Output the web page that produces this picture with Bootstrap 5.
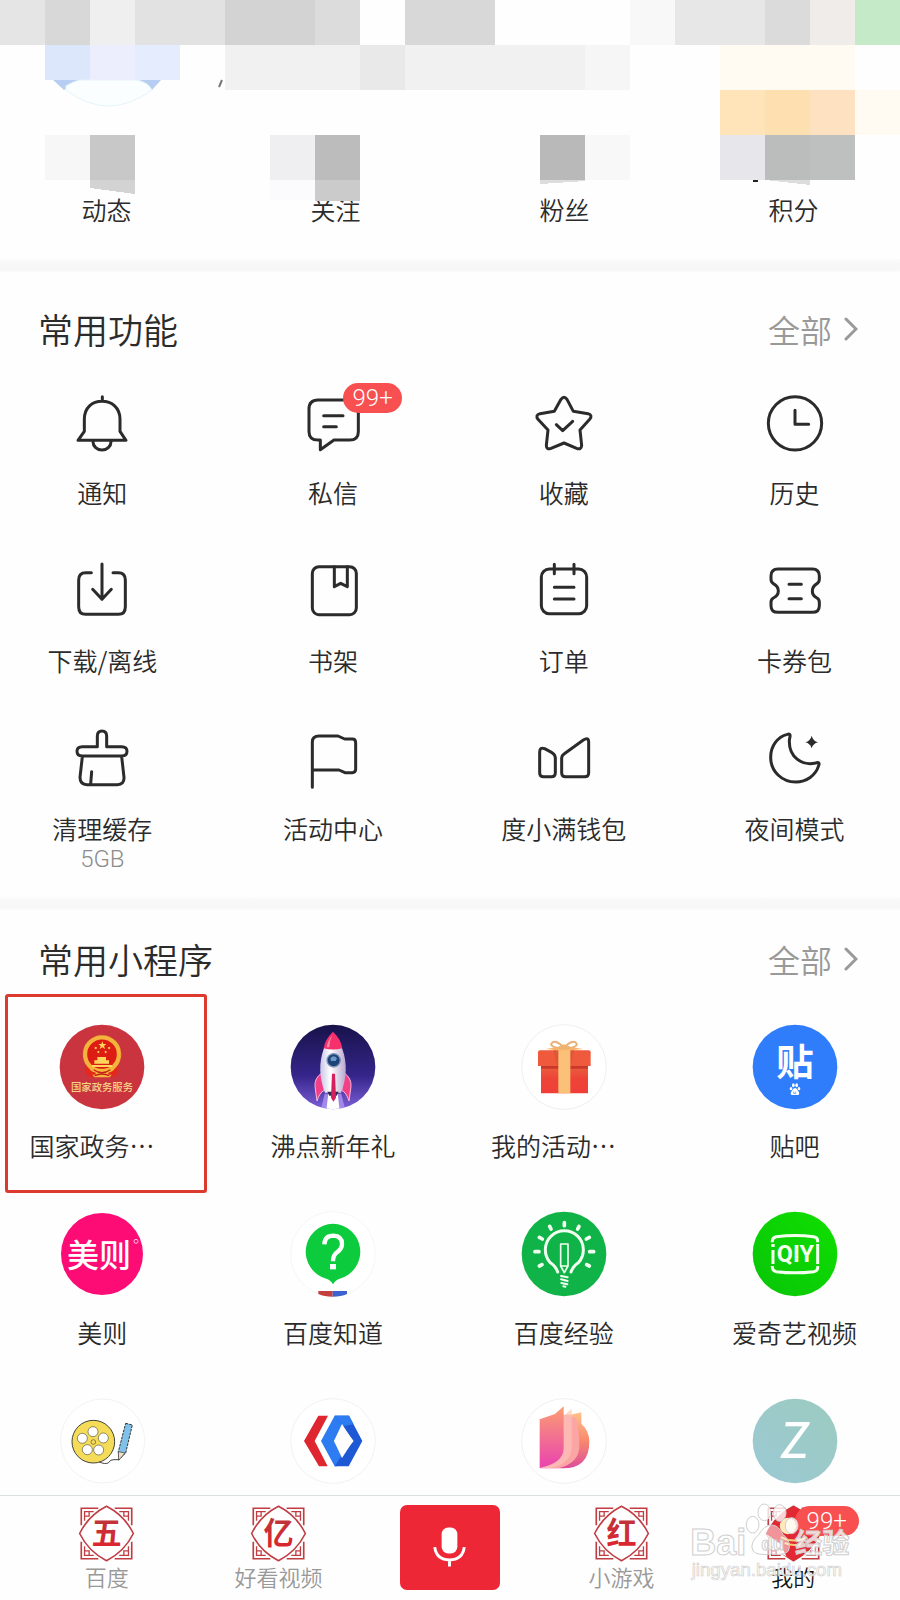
<!DOCTYPE html>
<html lang="zh-CN">
<head>
<meta charset="utf-8">
<meta name="viewport" content="width=device-width, initial-scale=1">
<title>我的</title>
<link href="https://cdn.jsdelivr.net/npm/bootstrap@5.3.0/dist/css/bootstrap.min.css" rel="stylesheet">
<style>
  body { font-family: "Noto Sans CJK SC", "Liberation Sans", sans-serif; font-weight: 350; color: #2b2b2b; background: #fefefe; }
  a { color: inherit; text-decoration: none; }
  svg { display: block; }
  .page { overflow-x: clip; }
  .mosaic { width: 100%; height: auto; overflow: visible; position: relative; z-index: 1; }
  .label-text { font-size: 25px; line-height: 30px; white-space: nowrap; }
  .stats { padding-bottom: 35px; }
  .band { height: 13px; background: linear-gradient(#fcfcfc, #f7f7f7 40%, #f7f7f7 80%, #fbfbfb); }
  .section-head { padding: 37px 42px 43px 38px; }
  .section-head.apps-head { padding-top: 29px; padding-bottom: 45px; }
  .section-head h2 { font-size: 35px; line-height: 40px; font-weight: 350; }
  .more-link { font-size: 32px; line-height: 40px; color: #999; gap: 12px; }
  .wide-row { margin-left: -13px; margin-right: -10px; }
  .feature-row { row-gap: 53px; }
  .feature-icon { width: 64px; height: 64px; margin-bottom: 21px; }
  .feature-icon svg { width: 64px; height: 64px; fill: none; stroke: #2b2b2b; stroke-width: 9; stroke-linecap: round; stroke-linejoin: round; }
  .cache-size { font: 300 24px/28px Roboto, sans-serif; color: #8c8c8c; padding-top: 2px; }
  .count-pill { position: absolute; width: 59px; height: 30px; border-radius: 15px; background: #f84f50; color: #fff; font: 300 24px/30px Roboto, sans-serif; text-align: center; }
  .feature-icon .count-pill { left: 42px; top: -9px; }
  .features { padding-bottom: 24px; }
  .app-row { row-gap: 51px; padding-bottom: 11px; }
  .app-icon { width: 86px; height: 86px; }
  .app-name { margin-top: 20px; }
  .clipped-name { width: 146px; }
  .highlight { position: absolute; left: 18px; right: 11px; top: -30px; bottom: -33px; border: 3px solid #dc3a2f; border-radius: 3px; pointer-events: none; }
  .tabbar { background: #fefefe; border-top: 1px solid #d9e0df; padding: 9px 21px 10px; }
  .tabbar .tab { flex: 1 1 0; font-size: 22px; line-height: 28px; color: #999; }
  .tabbar .tab.active { color: #111; }
  .tab svg { width: 57px; height: 57px; }
  .tab .count-pill { left: 30px; top: 1px; width: 64px; }
  .mic-btn { width: 100px; height: 85px; border-radius: 7px; background: #ee2737; }
  .watermark { position: absolute; right: 42px; top: 5px; width: 168px; height: 80px; pointer-events: none; }
</style>
</head>
<body>
<div class="page d-flex flex-column min-vh-100">

  <header>
    <svg class="mosaic" viewBox="0 0 900 194" shape-rendering="crispEdges" aria-hidden="true">
      <path fill="#e5e5e5" d="M0 0h45v45H0z"/><path fill="#d8d8d8" d="M45 0h45v45H45z"/><path fill="#efeff0" d="M90 0h45v45H90z"/>
      <path fill="#e2e2e2" d="M135 0h90v45h-90z"/><path fill="#d3d3d3" d="M225 0h90v45h-90z"/><path fill="#dcdcdc" d="M315 0h45v45h-45z"/>
      <path fill="#d8d8d8" d="M405 0h90v45h-90z"/><path fill="#f8f8f8" d="M630 0h45v45h-45z"/><path fill="#e7e7e7" d="M675 0h90v45h-90z"/>
      <path fill="#dbdbdb" d="M765 0h45v45h-45z"/><path fill="#f0ecea" d="M810 0h45v45h-45z"/><path fill="#c4eac8" d="M855 0h45v45h-45z"/>
      <path fill="#dce7fc" d="M45 45h45v35H45z"/><path fill="#edeefd" d="M90 45h45v35H90z"/><path fill="#e4ecfe" d="M135 45h45v35h-45z"/>
      <g shape-rendering="auto">
        <path fill="#b8cdf2" d="M53 80h26l-15 10zM139 80h22l-9 10z"/>
        <path fill="#fafeff" stroke="#e6f4fa" d="M66 86Q76 80 82 80H136Q148 82 152 90Q108 122 66 90z"/>
        <path stroke="#777" stroke-width="2" d="M222 80l-3 7"/>
      </g>
      <path fill="#f1f1f1" d="M225 45h360v45H225z"/><path fill="#e9e9e9" d="M360 45h45v45h-45z"/><path fill="#f6f6f6" d="M585 45h45v45h-45z"/>
      <path fill="#fffbf3" d="M720 45h135v45H720zM855 90h45v45h-45z"/>
      <path fill="#ffe4ba" d="M720 90h45v45h-45z"/><path fill="#fedfb0" d="M765 90h45v45h-45z"/><path fill="#fee1c0" d="M810 90h45v45h-45z"/>
      <path fill="#f7f7f7" d="M45 135h45v45H45z"/><path fill="#c8c8c8" d="M90 135h45v45H90z"/><path fill="#d3d3d3" d="M90 180h45v14l-45-6z"/>
      <path fill="#efeff1" d="M270 135h45v45h-45z"/><path fill="#fbfbfe" d="M270 180h45v20h-45z"/><path fill="#bcbcbc" d="M315 135h45v45h-45z"/><path fill="#cbcbcb" d="M315 180h45v21h-45z"/>
      <path fill="#b9b9b9" d="M540 135h45v45h-45z"/><path fill="#ddd" d="M540 180h45v1l-45 3z"/><path fill="#f8f8f8" d="M585 135h45v45h-45z"/>
      <path fill="#e7e6ea" d="M720 135h45v45h-45z"/><path fill="#bbbdbd" d="M765 135h45v45h-45z"/><path fill="#bdc0bf" d="M810 135h45v45h-45z"/><path fill="#ddd" d="M765 180h45v5z"/><path fill="#222" d="M753 180h5v2h-5z"/>
    </svg>
    <div class="row row-cols-4 gx-3 stats text-center label-text">
      <a class="col" href="#">动态</a>
      <a class="col" href="#">关注</a>
      <a class="col" href="#">粉丝</a>
      <a class="col" href="#">积分</a>
    </div>
  </header>

  <div class="band"></div>

  <section class="features">
    <div class="section-head d-flex justify-content-between align-items-center">
      <h2 class="mb-0">常用功能</h2>
      <a class="more-link d-flex align-items-center" href="#">全部
        <svg width="14" height="24" viewBox="0 0 14 24" fill="none" stroke="#999" stroke-width="3" stroke-linecap="round"><path d="M2 2l10 10L2 22"/></svg>
      </a>
    </div>
    <div class="row row-cols-4 wide-row feature-row label-text">
      <a class="col d-flex flex-column align-items-center" href="#">
        <span class="feature-icon"><svg viewBox="213 306 192 192"><path d="M310 320v12M237 451l19-27v-36c0-36 24-54 53-54s54 18 54 54v36l18 27zM282 455a27 25 0 0 0 54 0"/></svg></span>通知
      </a>
      <a class="col d-flex flex-column align-items-center" href="#">
        <span class="feature-icon position-relative"><svg viewBox="904 306 192 192"><path d="M1050 330H955q-27 0-27 27v68q0 25 27 25h7v29l41-29h47q26 0 26-25v-68M972 377h58M972 410h38"/></svg><span class="count-pill">99+</span></span>私信
      </a>
      <a class="col d-flex flex-column align-items-center" href="#">
        <span class="feature-icon"><svg viewBox="248 306 192 192"><path d="M335 328q9-13 18 0l19 36 44 7q15 5 5 17l-29 32 5 46q-1 14-15 9l-38-16-39 16q-14 5-14-9l5-46-30-32q-9-13 6-17l43-7zM321 404l19 18 30-28"/></svg></span>收藏
      </a>
      <a class="col d-flex flex-column align-items-center" href="#">
        <span class="feature-icon"><svg viewBox="941 306 192 192"><circle cx="1037" cy="400" r="80"/><path d="M1037 361v42h41"/></svg></span>历史
      </a>
      <a class="col d-flex flex-column align-items-center" href="#">
        <span class="feature-icon"><svg viewBox="213 60 192 192"><path d="M277 98h-17q-21 0-21 22v80q0 23 21 23h98q21 0 21-23v-80q0-22-21-22h-16M309 72v106M281 148l28 30 28-30"/></svg></span>下载/离线
      </a>
      <a class="col d-flex flex-column align-items-center" href="#">
        <span class="feature-icon"><svg viewBox="904 60 192 192"><rect x="938" y="80" width="132" height="144" rx="20"/><path d="M1004 80v60l19-10 20 10V80"/></svg></span>书架
      </a>
      <a class="col d-flex flex-column align-items-center" href="#">
        <span class="feature-icon"><svg viewBox="248 60 192 192"><rect x="276" y="87" width="136" height="134" rx="24"/><path d="M315 73v28M374 73v28M315 142h59M315 177h59"/></svg></span>订单
      </a>
      <a class="col d-flex flex-column align-items-center" href="#">
        <span class="feature-icon"><svg viewBox="940 60 192 192"><path d="M985 87h103q21 0 21 21v10q0 9-7 13-14 8-14 22t14 21q7 4 7 13v10q0 20-21 20H985q-21 0-21-20v-10q0-9 7-13 15-7 15-21t-15-22q-7-4-7-13v-10q0-21 21-21zM1018 133h37M1018 176h37"/></svg></span>卡券包
      </a>
      <a class="col d-flex flex-column align-items-center" href="#">
        <span class="feature-icon"><svg viewBox="213 564 192 192"><path d="M295 620v-32q0-15 14-15t14 15v32h45q16 0 16 14t-16 14H250q-16 0-16-14t16-14zM250 650l-7 62q0 22 21 22h91q21 0 20-22l-7-62M278 695l-3 37"/></svg></span>清理缓存
        <span class="cache-size">5GB</span>
      </a>
      <a class="col d-flex flex-column align-items-center" href="#">
        <span class="feature-icon"><svg viewBox="904 564 192 192"><path d="M938 742V606q0-18 20-18h57l20 9h23q10 0 10 11v80q0 10-10 10h-22l-18-8h-80"/></svg></span>活动中心
      </a>
      <a class="col d-flex flex-column align-items-center" href="#">
        <span class="feature-icon"><svg viewBox="248 564 192 192"><path d="M271 637q0-17 15-11l22 12q10 6 10 16v44q0 12-12 12h-23q-12 0-12-12zM337 655q0-9 8-14l57-41q16-10 16 6v92q0 12-12 12h-57q-12 0-12-12z"/></svg></span>度小满钱包
      </a>
      <a class="col d-flex flex-column align-items-center" href="#">
        <span class="feature-icon"><svg viewBox="940 564 192 192"><path d="M1013 583C984 590 963 618 963 652c0 43 34 74 75 74 33 0 60-20 69-49q5-13-9-8c-42 10-80-19-79-66q0-4 2-13 2-10-8-7z"/><path fill="#2b2b2b" stroke="none" d="M1086 587q4 16 19 20-15 4-19 18-4-14-19-18 15-4 19-20z"/></svg></span>夜间模式
      </a>
    </div>
  </section>

  <div class="band"></div>

  <section>
    <div class="section-head apps-head d-flex justify-content-between align-items-center">
      <h2 class="mb-0">常用小程序</h2>
      <a class="more-link d-flex align-items-center" href="#">全部
        <svg width="14" height="24" viewBox="0 0 14 24" fill="none" stroke="#999" stroke-width="3" stroke-linecap="round"><path d="M2 2l10 10L2 22"/></svg>
      </a>
    </div>
    <div class="row row-cols-4 wide-row app-row label-text">
      <a class="col d-flex flex-column align-items-center position-relative" href="#">
        <svg class="app-icon" viewBox="178 311 258 258">
          <circle cx="307" cy="440" r="127" fill="#c9343f"/>
          <path fill="#e5281c" d="M258 438h98v18l-10 14q-39-10-78 0l-10-14z"/>
          <circle cx="307" cy="402" r="51" fill="#dd1d14" stroke="#f4b33c" stroke-width="13"/>
          <circle cx="307" cy="402" r="57" fill="none" stroke="#d9801f" stroke-width="2" stroke-dasharray="5 6"/>
          <path fill="#ffd65a" d="M308 363l3 8h9l-7 6 3 9-8-5-8 5 3-9-7-6h9zM288 379l5 4-5 4-4-4zM328 379l5 4-5 4-4-4zM296 391l4 4-4 4-4-4zM318 391l4 4-4 4-4-4zM293 410h26v10h9v10h-44v-10h9zM277 434h60v6h-60z"/>
          <path fill="#f6b73b" d="M270 445h74q-4 10-18 11v7h10l-6 8h-46l-6-8h10v-7q-14-1-18-11z"/>
          <path stroke="#c6221b" stroke-width="4" fill="none" d="M282 448q25 18 50 0M285 466q22-10 44 0"/>
          <text x="307" y="513" font-size="31" fill="#f6d486" font-weight="500" text-anchor="middle">国家政务服务</text>
        </svg>
        <span class="app-name clipped-name">国家政务…</span>
        <span class="highlight"></span>
      </a>
      <a class="col d-flex flex-column align-items-center" href="#">
        <svg class="app-icon" viewBox="871 311 258 258">
          <defs>
            <linearGradient id="sky" x1="0" y1="0" x2="0" y2="1"><stop offset="0" stop-color="#17124a"/><stop offset=".6" stop-color="#35258a"/><stop offset="1" stop-color="#7c5fd8"/></linearGradient>
            <linearGradient id="hull" x1="0" y1="0" x2="1" y2="0"><stop offset="0" stop-color="#c9c6e8"/><stop offset=".4" stop-color="#fff"/><stop offset="1" stop-color="#b9a6cf"/></linearGradient>
            <clipPath id="sky-clip"><circle cx="1000" cy="440" r="127"/></clipPath>
          </defs>
          <circle cx="1000" cy="440" r="127" fill="url(#sky)"/>
          <g clip-path="url(#sky-clip)">
            <path fill="#b7a0f5" opacity=".7" d="M975 520h50l12 50h-74z"/><path fill="#fff" d="M986 520h28l6 50h-40z"/>
          </g>
          <path fill="#f33f87" stroke="#ffb5d4" stroke-width="3" d="M966 458q-22 16-20 40l6 44q8-26 22-32zM1034 458q22 16 20 40l-6 44q-8-26-22-32z"/>
          <path fill="url(#hull)" d="M973 383h54q24 66-3 134h-48q-27-68-3-134z"/>
          <path fill="#f5306c" d="M1000 334q25 24 28 50-28 7-56 0 3-26 28-50z"/><path fill="#ff8bab" d="M998 345q-15 18-17 36h8q0-20 9-36z"/>
          <circle cx="1002" cy="420" r="20" fill="#1d4478" stroke="#8294b8" stroke-width="4"/><path fill="#6d99c8" d="M992 414q10-12 20 0l-4 8h-14z"/>
          <path fill="#32284d" d="M983 514h34l-6 12h-22z"/><path fill="#d5205d" d="M997 460h9l3 72-8 12-7-12z"/>
        </svg>
        <span class="app-name">沸点新年礼</span>
      </a>
      <a class="col d-flex flex-column align-items-center" href="#">
        <svg class="app-icon" viewBox="213 311 258 258">
          <defs><linearGradient id="gift" x1="0" y1="0" x2="0" y2="1"><stop offset="0" stop-color="#e8663f"/><stop offset=".5" stop-color="#ee4438"/><stop offset="1" stop-color="#ef3f38"/></linearGradient></defs>
          <circle cx="342" cy="440" r="127" fill="#fff" stroke="#f0efef" stroke-width="3"/>
          <path fill="url(#gift)" d="M273 430h141v89H273z"/><path fill="#c93929" d="M273 437h141v8H273z"/>
          <path fill="#ef5a3c" d="M264 396q0-6 6-6h146q6 0 6 6v41H264z"/><path fill="#df5638" d="M310 390h62l-10 47h-42z"/>
          <path fill="#fbc178" d="M325 388h36v131h-36z"/><path fill="#fbb568" d="M286 386l34-5 22-9 24 9 34 5-36 4h-44z"/>
          <path fill="none" stroke="#eab277" stroke-width="6" d="M340 384q-40-2-36-14 10-16 38 12M344 384q40-2 36-14-10-16-38 12"/>
        </svg>
        <span class="app-name clipped-name">我的活动…</span>
      </a>
      <a class="col d-flex flex-column align-items-center" href="#">
        <svg class="app-icon" viewBox="906 311 258 258">
          <circle cx="1035" cy="440" r="127" fill="#2f7dfb"/>
          <text x="1035" y="467" font-size="112" font-weight="700" fill="#fff" text-anchor="middle">贴</text>
          <g fill="#fff"><ellipse cx="1023" cy="505" rx="4" ry="5"/><ellipse cx="1030" cy="495" rx="4" ry="6"/><ellipse cx="1040" cy="495" rx="4" ry="6"/><ellipse cx="1047" cy="505" rx="4" ry="5"/><path d="M1035 503q6 0 9 8 7 8 1 13-10 0-10-1-2 2-10 1-6-5 1-13 3-8 9-8z"/></g>
          <path fill="none" stroke="#2f7dfb" stroke-width="2" d="M1031 514v5h6v-5"/>
        </svg>
        <span class="app-name">贴吧</span>
      </a>

      <a class="col d-flex flex-column align-items-center" href="#">
        <svg class="app-icon" viewBox="178 63 258 258">
          <circle cx="307" cy="192" r="123" fill="#fc0c74"/>
          <text x="298" y="231" font-size="96" font-weight="500" fill="#fff" text-anchor="middle">美则</text>
          <circle cx="409" cy="154" r="6" fill="none" stroke="#ffc4dc" stroke-width="3"/>
        </svg>
        <span class="app-name">美则</span>
      </a>
      <a class="col d-flex flex-column align-items-center" href="#">
        <svg class="app-icon" viewBox="871 63 258 258">
          <circle cx="1000" cy="192" r="127" fill="#fff" stroke="#f2f2f2" stroke-width="2"/>
          <path fill="#0ccb3d" d="M1000 101a84 84 0 0 1 20 165q-12 3-20 17-8-14-20-17a84 84 0 0 1 20-165z"/>
          <path fill="none" stroke="#fff" stroke-width="13" d="M974 163q1-26 27-26 26 1 26 25 0 14-14 24-13 9-13 28"/><path fill="#fff" d="M991 222h18v16h-18z"/>
          <path fill="#c4403f" d="M956 303h43v17q-25 0-43-8z"/><path fill="#3b62cf" d="M999 303h43v9q-18 8-43 8z"/>
        </svg>
        <span class="app-name">百度知道</span>
      </a>
      <a class="col d-flex flex-column align-items-center" href="#">
        <svg class="app-icon" viewBox="213 63 258 258">
          <circle cx="342" cy="192" r="127" fill="#10b347"/>
          <g fill="none" stroke="#f0fff0" stroke-linecap="round">
            <path stroke-width="9" d="M323 246q-6-18-22-28a57 57 0 1 1 84 0q-16 10-22 28"/>
            <path stroke-width="11" d="M343 98v9M299 109l4 8M387 109l-4 8M268 142l9 5M418 142l-9 5M255 185h12M419 185h12M268 228l8-4M418 228l-8-4"/>
            <path stroke-width="5" stroke-linejoin="round" d="M332 162h22v66l-11 20-11-20zM332 228h22"/>
            <path stroke-width="6" d="M333 258l20 4M333 268l20 5M334 279l18 4M340 289l6 1"/>
          </g>
        </svg>
        <span class="app-name">百度经验</span>
      </a>
      <a class="col d-flex flex-column align-items-center" href="#">
        <svg class="app-icon" viewBox="906 63 258 258">
          <defs><linearGradient id="qiy" x1="1" y1="0" x2="0" y2="1"><stop offset="0" stop-color="#10e000"/><stop offset="1" stop-color="#08c408"/></linearGradient></defs>
          <circle cx="1035" cy="192" r="127" fill="url(#qiy)"/>
          <path fill="none" stroke="#f4fff0" stroke-width="9" d="M967 157v-5q1-10 12-12 56-7 112 0 12 2 12 12v5M967 228v5q1 10 12 12 56 7 112 0 12-2 12-12v-5M1103 162v60M969 180v42"/>
          <path fill="#f4fff0" d="M964 162h10v9h-10z"/>
          <text x="1036" y="217" font-size="70" font-weight="700" font-family="'Liberation Sans Narrow', Roboto, sans-serif" fill="#f4fff0" text-anchor="middle">QIY</text>
        </svg>
        <span class="app-name">爱奇艺视频</span>
      </a>

      <a class="col d-flex flex-column align-items-center" href="#" aria-label="影视剪辑">
        <svg class="app-icon" viewBox="178 626 258 258">
          <circle cx="309" cy="755" r="126" fill="#fff" stroke="#f3f3f3" stroke-width="3"/>
          <circle cx="281" cy="757" r="64" fill="#f5dc58" stroke="#43413a" stroke-width="3"/>
          <g fill="#fff" stroke="#5a5540" stroke-width="2"><circle cx="280" cy="727" r="15"/><circle cx="311" cy="746" r="15"/><circle cx="297" cy="782" r="15"/><circle cx="263" cy="781" r="15"/><circle cx="248" cy="747" r="15"/><circle cx="281" cy="758" r="7" fill="#f5dc58"/></g>
          <path fill="#7fc1e9" stroke="#333" stroke-width="3" stroke-dasharray="8 3" d="M378 702l20 5-20 84-20 20-2-24z"/><path fill="#f4dfc6" stroke="#333" stroke-width="2" d="M356 787l20 4-19 22z"/>
          <path fill="none" stroke="#444" stroke-width="3" d="M299 818q18 8 28 2 4-10 16-9h14"/>
        </svg>
      </a>
      <a class="col d-flex flex-column align-items-center" href="#" aria-label="百度小程序">
        <svg class="app-icon" viewBox="871 626 258 258">
          <circle cx="1000" cy="755" r="127" fill="#fff" stroke="#f2f2f2" stroke-width="3"/>
          <path fill="#df2530" d="M956 679h29l-40 76 39 76h-26l-45-76z"/>
          <path fill="#2d7cf2" d="M1005 679h43l-20 32-25 44 24 42-15 34h-7l-41-76z"/>
          <path fill="#1f58d4" d="M1048 679l40 76-41 76h-42l22-34 35-42-34-44-23-32z"/>
          <path fill="#2d7cf2" d="M1005 679h43l14 26-34 6z"/>
          <path fill="#fff" d="M1027 704l33 51-33 51-24-51z"/>
        </svg>
      </a>
      <a class="col d-flex flex-column align-items-center" href="#" aria-label="阅读">
        <svg class="app-icon" viewBox="213 626 258 258">
          <defs>
            <linearGradient id="leaf-a" x1="0" y1="0" x2="0" y2="1"><stop offset="0" stop-color="#fb9e72"/><stop offset="1" stop-color="#ea42b0"/></linearGradient>
            <linearGradient id="leaf-b" x1="0" y1="0" x2="0" y2="1"><stop offset="0" stop-color="#ffc28c"/><stop offset=".5" stop-color="#f98a6c"/><stop offset="1" stop-color="#dc4c9c"/></linearGradient>
          </defs>
          <circle cx="342" cy="755" r="127" fill="#fff" stroke="#f2f0f0" stroke-width="3"/>
          <path fill="url(#leaf-b)" d="M345 680l49-11v34q24 22 24 54 0 80-80 80h-69q76-10 76-60z"/>
          <path fill="#ffd9c0" d="M341 680l24-22v30h-24z"/>
          <path fill="#fba6a4" d="M341 684h37q10 40 10 86 0 50-60 66h-59z"/>
          <path fill="#fcb9b4" d="M341 676h24v98q0 46-60 62h-36z"/>
          <path fill="url(#leaf-a)" d="M269 690l46-16 26-23v126q0 44-72 59z"/>
        </svg>
      </a>
      <a class="col d-flex flex-column align-items-center" href="#" aria-label="Z">
        <svg class="app-icon" viewBox="906 626 258 258">
          <defs><linearGradient id="zbg" x1="0" y1="1" x2="1" y2="0"><stop offset="0" stop-color="#9bc9d4"/><stop offset="1" stop-color="#9ccbc0"/></linearGradient></defs>
          <circle cx="1035" cy="755" r="127" fill="url(#zbg)"/>
          <text x="1035" y="807" font-size="148" font-family="Lato, sans-serif" font-style="italic" font-weight="500" fill="#fff" text-anchor="middle">Z</text>
        </svg>
      </a>
    </div>
  </section>

  <nav class="tabbar sticky-bottom mt-auto d-flex align-items-start text-center">
    <a class="tab d-flex flex-column align-items-center" href="#">
      <svg viewBox="0 0 174 174">
        <defs>
          <linearGradient id="ink" x1="0" y1="0" x2="0" y2="1"><stop offset="0" stop-color="#b53a3e"/><stop offset="1" stop-color="#e3202c"/></linearGradient>
          <g id="tile-frame" fill="none" stroke="#c03d43" stroke-width="5">
            <path d="M10 62V10h52M112 10h52v52M164 112v52h-52M62 164H10v-52"/>
            <path stroke-width="4" d="M20 48V20h28M126 20h28v28M154 126v28h-28M48 154H20v-28M20 34h14V20M140 20v14h14M154 140h-14v14M34 154v-14H20"/>
            <path fill="#fff" stroke-width="5" d="M87 4q55 28 82 83-27 55-82 83Q32 142 5 87 32 32 87 4z"/>
          </g>
        </defs>
        <use href="#tile-frame"/>
        <text x="87" y="120" font-size="92" font-weight="700" fill="url(#ink)" text-anchor="middle">五</text>
      </svg>百度
    </a>
    <a class="tab d-flex flex-column align-items-center" href="#">
      <svg viewBox="0 0 174 174"><use href="#tile-frame"/><text x="87" y="120" font-size="92" font-weight="700" fill="url(#ink)" text-anchor="middle">亿</text></svg>好看视频
    </a>
    <div class="tab d-flex justify-content-center">
      <button type="button" class="mic-btn btn border-0 p-0 d-flex justify-content-center align-items-center" aria-label="语音搜索">
        <svg viewBox="0 0 174 174" fill="none" stroke="#fff"><rect x="63" y="26" width="48" height="79" rx="20" fill="#fff" stroke="none"/><path stroke-width="9" d="M42 86q5 39 45 39t45-39M87 125v20"/></svg>
      </button>
    </div>
    <a class="tab d-flex flex-column align-items-center" href="#">
      <svg viewBox="0 0 174 174"><use href="#tile-frame"/><text x="87" y="120" font-size="92" font-weight="700" fill="url(#ink)" text-anchor="middle">红</text></svg>小游戏
    </a>
    <a class="tab active d-flex flex-column align-items-center" href="#">
      <span class="position-relative">
        <svg viewBox="0 0 174 174">
          <use href="#tile-frame"/>
          <path fill="#e22832" d="M87 4q55 28 82 83-27 55-82 83Q32 142 5 87 32 32 87 4z"/>
          <path fill="#fff" d="M6 90q10 40 60 68l-20-40z"/>
          <circle cx="70" cy="64" r="25" fill="#fde9bb"/><path fill="none" stroke="#f6cf74" stroke-width="6" d="M48 98q38 20 82 2M60 116q30 12 60 0"/>
        </svg>
        <span class="count-pill">99+</span>
      </span>我的
    </a>
    <svg class="watermark" viewBox="717 60 504 240" aria-hidden="true">
      <g fill="#fff" fill-opacity=".8" stroke="#cfcfcf" stroke-width="3">
        <ellipse cx="905" cy="131" rx="19" ry="25"/><ellipse cx="940" cy="94" rx="19" ry="25"/><ellipse cx="986" cy="96" rx="19" ry="25"/><ellipse cx="1022" cy="134" rx="19" ry="24"/>
        <path fill-opacity=".5" d="M962 132q20 0 34 28 28 24 16 50-10 14-50 9-42 6-56-9-12-24 18-50 16-28 38-28z"/>
        <text x="718" y="221" font-size="108" font-weight="700" font-family="'Liberation Sans', sans-serif">Bai</text>
        <text x="931" y="208" font-size="56" font-weight="700" font-family="'Liberation Sans', sans-serif">du</text>
        <text x="1032" y="215" font-size="82" font-weight="700">经验</text>
        <text x="722" y="284" font-size="56" stroke-width="2" font-family="'Liberation Sans', sans-serif">jingyan.baidu.com</text>
      </g>
    </svg>
  </nav>
</div>
<script src="https://cdn.jsdelivr.net/npm/bootstrap@5.3.0/dist/js/bootstrap.bundle.min.js"></script>
</body>
</html>
